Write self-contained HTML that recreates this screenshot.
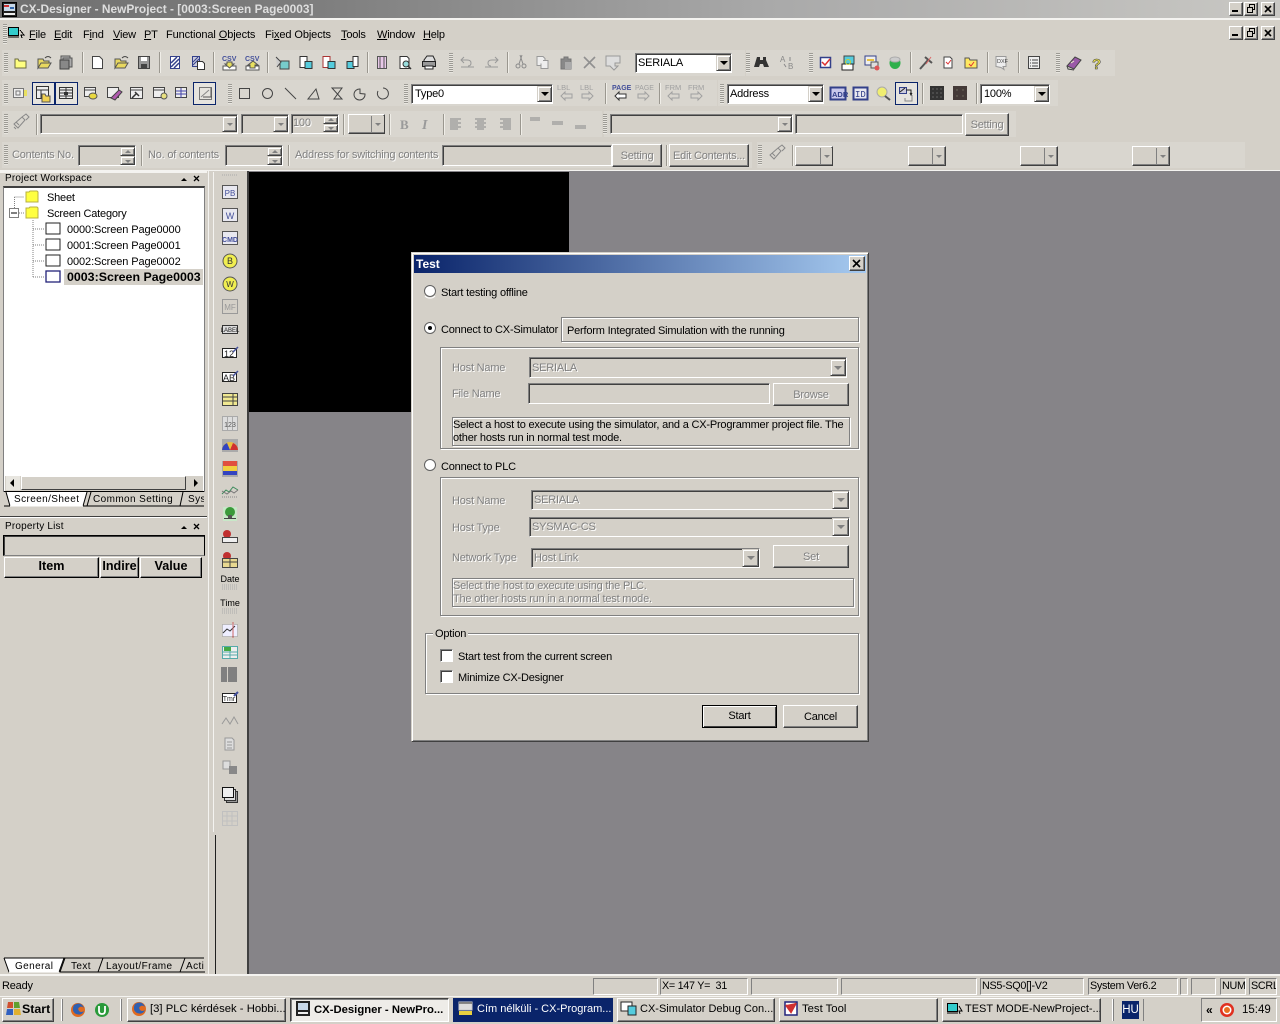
<!DOCTYPE html>
<html><head><meta charset="utf-8"><title>CX-Designer</title>
<style>
html,body{margin:0;padding:0;background:#d4d0c8;}
#r{position:relative;width:1280px;height:1024px;overflow:hidden;background:#d4d0c8;font:12px/14px "Liberation Sans",sans-serif;color:#000;}
#r div{position:absolute;box-sizing:border-box;}
.t{white-space:nowrap;font-size:11px;letter-spacing:-.2px;line-height:14px;margin-top:1px;}
.d{color:#808080;text-shadow:1px 1px 0 #fff;}
.su{background:#d4d0c8;border:1px solid;border-color:#808080 #fff #fff #808080;box-shadow:inset 1px 1px 0 #404040;}
.wh{background:#fff;}
.bt{background:#d4d0c8;border:1px solid;border-color:#fff #404040 #404040 #fff;box-shadow:inset -1px -1px 0 #808080;text-align:center;white-space:nowrap;font-size:11px;letter-spacing:-.2px;line-height:18px;padding-top:1px;}
.et{border:1px solid #808080;box-shadow:1px 1px 0 #fff,inset 1px 1px 0 #fff;}
.ar{background:#d4d0c8;border:1px solid;border-color:#d4d0c8 #404040 #404040 #d4d0c8;box-shadow:inset 1px 1px 0 #fff,inset -1px -1px 0 #808080;}
.ar:after{content:"";position:absolute;left:50%;top:50%;margin:-2px 0 0 -4px;border:4px solid transparent;border-top:4px solid #000;border-bottom:0;}
.ar.g:after{border-top-color:#808080;}
.ar.s:after{margin:-1px 0 0 -3px;border-width:3px;border-bottom:0;border-top-color:#808080;}
.ar.u:after{margin:-2px 0 0 -3px;border-width:3px;border-top:0;border-bottom:3px solid #808080;}
.tb{background:#d9d6cf;}
.gr{position:absolute;width:4px;background:repeating-linear-gradient(#9c9a94 0 1px,#e8e6e0 1px 2px);}
.sep{width:1px;background:#9a978f;box-shadow:1px 0 0 #f0eee8;}
.pr{background:#e6e4df;border:1px solid #0a246a;}
.st{border:1px solid;border-color:#808080 #fff #fff #808080;font-size:10.8px;letter-spacing:-.3px;line-height:15px;white-space:nowrap;padding-left:1px;overflow:hidden;}
.ws{background:#d4d0c8;border:1px solid;border-color:#fff #404040 #404040 #fff;box-shadow:inset -1px -1px 0 #808080;}
.task{background:#d4d0c8;border:1px solid;border-color:#fff #404040 #404040 #fff;box-shadow:inset -1px -1px 0 #808080;height:24px;top:998px;font-size:11.3px;line-height:21px;white-space:nowrap;overflow:hidden;}
.tab{font-size:10px;letter-spacing:.4px;white-space:nowrap;line-height:13px;z-index:2;margin-top:1px;}
</style></head><body><div id="r">

<!-- title -->
<div style="left:0;top:0;width:1280px;height:18px;background:linear-gradient(90deg,#6f6f6f 0,#7e7e7e 25%,#a9a9a9 60%,#c9c8c4 100%)"></div>
<div style="left:0;top:18px;width:1280px;height:2px;background:#f4f3f0"></div>
<div class="t" style="left:20px;top:2px;margin-top:0;letter-spacing:0;color:#dedede;font-weight:bold;font-size:11.9px;">CX-Designer - NewProject - [0003:Screen Page0003]</div>
<div class="ws" style="left:1229px;top:2px;width:14px;height:14px"></div>
<div class="ws" style="left:1244px;top:2px;width:14px;height:14px"></div>
<div class="ws" style="left:1261px;top:2px;width:14px;height:14px"></div>
<div class="ws" style="left:1229px;top:26px;width:14px;height:14px"></div>
<div class="ws" style="left:1244px;top:26px;width:14px;height:14px"></div>
<div class="ws" style="left:1261px;top:26px;width:14px;height:14px"></div>

<!-- menu -->
<div class="gr" style="left:3px;top:24px;height:20px"></div>
<div class="t" style="left:29px;top:27px"><u>F</u>ile</div>
<div class="t" style="left:54px;top:27px"><u>E</u>dit</div>
<div class="t" style="left:83px;top:27px">F<u>i</u>nd</div>
<div class="t" style="left:113px;top:27px"><u>V</u>iew</div>
<div class="t" style="left:144px;top:27px"><u>P</u>T</div>
<div class="t" style="left:166px;top:27px;letter-spacing:-.1px">Functional <u>O</u>bjects</div>
<div class="t" style="left:265px;top:27px;letter-spacing:-.1px">Fi<u>x</u>ed Objects</div>
<div class="t" style="left:341px;top:27px"><u>T</u>ools</div>
<div class="t" style="left:377px;top:27px"><u>W</u>indow</div>
<div class="t" style="left:423px;top:27px"><u>H</u>elp</div>

<!-- toolbar backgrounds -->
<div class="tb" style="left:2px;top:50px;width:743px;height:26px"></div>
<div class="tb" style="left:746px;top:50px;width:68px;height:26px"></div>
<div class="tb" style="left:807px;top:50px;width:308px;height:26px"></div>
<div class="tb" style="left:2px;top:80px;width:225px;height:26px"></div>
<div class="tb" style="left:225px;top:80px;width:180px;height:26px"></div>
<div class="tb" style="left:405px;top:80px;width:312px;height:26px"></div>
<div class="tb" style="left:718px;top:80px;width:258px;height:26px"></div>
<div class="tb" style="left:976px;top:80px;width:82px;height:26px"></div>
<div class="tb" style="left:2px;top:111px;width:600px;height:26px"></div>
<div class="tb" style="left:604px;top:111px;width:412px;height:26px"></div>
<div class="tb" style="left:2px;top:142px;width:750px;height:26px"></div>
<div class="tb" style="left:757px;top:142px;width:488px;height:26px"></div>

<div class="gr" style="left:4px;top:53px;height:20px"></div>
<div class="gr" style="left:4px;top:84px;height:20px"></div>
<div class="gr" style="left:4px;top:114px;height:20px"></div>
<div class="gr" style="left:4px;top:145px;height:20px"></div>
<div class="gr" style="left:449px;top:53px;height:20px"></div>
<div class="gr" style="left:228px;top:84px;height:20px"></div>
<div class="gr" style="left:404px;top:84px;height:20px"></div>
<div class="gr" style="left:746px;top:53px;height:20px"></div>
<div class="gr" style="left:809px;top:53px;height:20px"></div>
<div class="gr" style="left:1056px;top:53px;height:20px"></div>
<div class="gr" style="left:720px;top:84px;height:20px"></div>
<div class="gr" style="left:603px;top:114px;height:20px"></div>
<div class="gr" style="left:758px;top:145px;height:20px"></div>

<!-- separators -->
<div class="sep" style="left:82px;top:52px;height:21px"></div>
<div class="sep" style="left:159px;top:52px;height:21px"></div>
<div class="sep" style="left:213px;top:52px;height:21px"></div>
<div class="sep" style="left:267px;top:52px;height:21px"></div>
<div class="sep" style="left:367px;top:52px;height:21px"></div>
<div class="sep" style="left:507px;top:52px;height:21px"></div>
<div class="sep" style="left:910px;top:52px;height:21px"></div>
<div class="sep" style="left:987px;top:52px;height:21px"></div>
<div class="sep" style="left:1018px;top:52px;height:21px"></div>
<div class="sep" style="left:605px;top:83px;height:21px"></div>
<div class="sep" style="left:659px;top:83px;height:21px"></div>
<div class="sep" style="left:922px;top:83px;height:21px"></div>
<div class="sep" style="left:976px;top:83px;height:21px"></div>
<div class="sep" style="left:36px;top:114px;height:21px"></div>
<div class="sep" style="left:343px;top:114px;height:21px"></div>
<div class="sep" style="left:389px;top:114px;height:21px"></div>
<div class="sep" style="left:443px;top:114px;height:21px"></div>
<div class="sep" style="left:520px;top:114px;height:21px"></div>
<div class="sep" style="left:141px;top:145px;height:21px"></div>
<div class="sep" style="left:288px;top:145px;height:21px"></div>
<div class="sep" style="left:666px;top:145px;height:21px"></div>
<div class="sep" style="left:792px;top:145px;height:21px"></div>

<!-- pressed toolbar -->
<div class="pr" style="left:32px;top:82px;width:23px;height:23px"></div>
<div class="pr" style="left:55px;top:82px;width:23px;height:23px"></div>
<div class="pr" style="left:193px;top:82px;width:23px;height:23px"></div>
<div class="pr" style="left:895px;top:82px;width:23px;height:23px"></div>

<!-- row 1 combo -->
<div class="su wh" style="left:635px;top:53px;width:97px;height:20px"></div>
<div class="t" style="left:638px;top:55px">SERIALA</div>
<div class="ar" style="left:716px;top:55px;width:15px;height:16px"></div>
<!-- row 2 combos -->
<div class="su wh" style="left:411px;top:84px;width:142px;height:20px"></div>
<div class="t" style="left:415px;top:86px">Type0</div>
<div class="ar" style="left:537px;top:86px;width:15px;height:16px"></div>
<div class="su wh" style="left:727px;top:84px;width:97px;height:20px"></div>
<div class="t" style="left:730px;top:86px">Address</div>
<div class="ar" style="left:808px;top:86px;width:15px;height:16px"></div>
<div class="su wh" style="left:980px;top:84px;width:70px;height:20px"></div>
<div class="t" style="left:984px;top:86px">100%</div>
<div class="ar" style="left:1034px;top:86px;width:15px;height:16px"></div>

<!-- row 3 -->
<div class="su" style="left:40px;top:114px;width:198px;height:20px"></div>
<div class="ar s" style="left:222px;top:116px;width:15px;height:16px"></div>
<div class="su" style="left:241px;top:114px;width:48px;height:20px"></div>
<div class="ar s" style="left:273px;top:116px;width:15px;height:16px"></div>
<div class="su" style="left:291px;top:114px;width:48px;height:20px"></div>
<div class="t d" style="left:293px;top:115px">100</div>
<div class="ar u" style="left:323px;top:116px;width:15px;height:8px"></div>
<div class="ar s" style="left:323px;top:124px;width:15px;height:8px"></div>
<div class="bt" style="left:348px;top:114px;width:37px;height:20px"></div>
<div class="ar s" style="left:372px;top:116px;width:12px;height:16px;border:0;box-shadow:-1px 0 0 #808080"></div>
<div class="su" style="left:610px;top:114px;width:183px;height:20px"></div>
<div class="ar s" style="left:777px;top:116px;width:15px;height:16px"></div>
<div class="su" style="left:795px;top:114px;width:168px;height:20px"></div>
<div class="bt d" style="left:965px;top:113px;width:44px;height:23px;line-height:20px">Setting</div>

<!-- row 4 -->
<div class="t d" style="left:12px;top:147px">Contents No.</div>
<div class="su" style="left:78px;top:145px;width:58px;height:21px"></div>
<div class="ar u" style="left:120px;top:147px;width:15px;height:9px"></div>
<div class="ar s" style="left:120px;top:156px;width:15px;height:9px"></div>
<div class="t d" style="left:148px;top:147px">No. of contents</div>
<div class="su" style="left:225px;top:145px;width:58px;height:21px"></div>
<div class="ar u" style="left:267px;top:147px;width:15px;height:9px"></div>
<div class="ar s" style="left:267px;top:156px;width:15px;height:9px"></div>
<div class="t d" style="left:295px;top:147px">Address for switching contents</div>
<div class="su" style="left:442px;top:145px;width:170px;height:21px"></div>
<div class="bt d" style="left:612px;top:144px;width:50px;height:23px;line-height:20px">Setting</div>
<div class="bt d" style="left:669px;top:144px;width:80px;height:23px;line-height:20px">Edit Contents...</div>
<div class="bt" style="left:795px;top:146px;width:38px;height:20px"></div>
<div class="ar s" style="left:821px;top:148px;width:11px;height:16px;border:0;box-shadow:-1px 0 0 #808080"></div>
<div class="bt" style="left:908px;top:146px;width:38px;height:20px"></div>
<div class="ar s" style="left:933px;top:148px;width:11px;height:16px;border:0;box-shadow:-1px 0 0 #808080"></div>
<div class="bt" style="left:1020px;top:146px;width:38px;height:20px"></div>
<div class="ar s" style="left:1045px;top:148px;width:11px;height:16px;border:0;box-shadow:-1px 0 0 #808080"></div>
<div class="bt" style="left:1132px;top:146px;width:38px;height:20px"></div>
<div class="ar s" style="left:1157px;top:148px;width:11px;height:16px;border:0;box-shadow:-1px 0 0 #808080"></div>

<div style="left:0;top:170px;width:1280px;height:1px;background:#f4f3f0"></div>

<!-- MDI -->
<div style="left:247px;top:171px;width:1033px;height:803px;background:#868488;border-left:2px solid #404040"></div>
<div style="left:249px;top:172px;width:320px;height:240px;background:#000"></div>
<div style="left:0;top:974px;width:1280px;height:2px;background:#f4f3f0"></div>

<!-- left panel -->
<div style="left:0;top:171px;width:207px;height:2px;background:#f4f3f0"></div>
<div class="t" style="left:5px;top:172px;margin-top:0;font-size:10px;letter-spacing:.2px">Project Workspace</div>
<div style="left:3px;top:186px;width:202px;height:306px;background:#fff;border:1px solid #808080;border-top:2px solid #404040"></div>
<div class="t" style="left:47px;top:190px">Sheet</div>
<div class="t" style="left:47px;top:206px">Screen Category</div>
<div class="t" style="left:67px;top:222px;letter-spacing:-.1px">0000:Screen Page0000</div>
<div class="t" style="left:67px;top:238px;letter-spacing:-.1px">0001:Screen Page0001</div>
<div class="t" style="left:67px;top:254px;letter-spacing:-.1px">0002:Screen Page0002</div>
<div style="left:64px;top:269px;width:139px;height:16px;background:#d4d0c8"></div>
<div class="t" style="left:67px;top:270px;margin-top:0;font-weight:bold;font-size:12.4px;letter-spacing:0">0003:Screen Page0003</div>
<!-- scrollbar -->
<div style="left:5px;top:476px;width:198px;height:15px;background:#d4d0c8"></div>
<div style="left:6px;top:476px;width:14px;height:14px;background:#e8e6e0"></div>
<div style="left:21px;top:476px;width:165px;height:14px;background:#d4d0c8;border:1px solid;border-color:#fff #404040 #404040 #fff"></div>
<div style="left:10px;top:479px;width:0;height:0;border:4px solid transparent;border-right-color:#000;border-left:0"></div>
<div style="left:194px;top:479px;width:0;height:0;border:4px solid transparent;border-left-color:#000;border-right:0"></div>
<!-- tabs -->
<div style="left:4px;top:491px;width:200px;height:16px;background:#d4d0c8;border-top:1px solid #000"></div>
<div class="tab" style="left:14px;top:492px">Screen/Sheet</div>
<div class="tab" style="left:93px;top:492px">Common Setting</div>
<div class="tab" style="left:188px;top:492px;width:16px;overflow:hidden">Sys</div>

<div style="left:0;top:516px;width:207px;height:1px;background:#404040"></div>
<div style="left:0;top:517px;width:207px;height:1px;background:#fff"></div>
<div class="t" style="left:5px;top:519px;font-size:10px;letter-spacing:.2px">Property List</div>
<div style="left:3px;top:535px;width:202px;height:21px;border:1px solid;border-color:#000 #000 #808080 #000;box-shadow:inset 1px 1px 0 #404040"></div>
<div style="left:3px;top:556px;width:202px;height:418px;background:#d4d0c8"></div>
<div class="bt" style="left:4px;top:557px;width:95px;height:21px;font-weight:bold;font-size:12.6px;letter-spacing:0;line-height:17px;padding:0;border-color:#fff #000 #000 #fff">Item</div>
<div class="bt" style="left:100px;top:557px;width:39px;height:21px;font-weight:bold;font-size:12.6px;letter-spacing:0;line-height:17px;padding:0;border-color:#fff #000 #000 #fff">Indire</div>
<div class="bt" style="left:140px;top:557px;width:62px;height:21px;font-weight:bold;font-size:12.6px;letter-spacing:0;line-height:17px;padding:0;border-color:#fff #000 #000 #fff">Value</div>
<div class="tab" style="left:15px;top:959px">General</div>
<div class="tab" style="left:71px;top:959px">Text</div>
<div class="tab" style="left:106px;top:959px">Layout/Frame</div>
<div class="tab" style="left:186px;top:959px;width:18px;overflow:hidden">Acti</div>
<div style="left:215px;top:835px;width:1px;height:139px;background:#202020"></div>
<div style="left:208px;top:171px;width:1px;height:803px;background:#f4f3f0"></div>
<div style="left:213px;top:172px;width:1px;height:660px;background:#f4f3f0"></div>

<!-- side labels -->
<div class="t" style="left:219px;top:572px;font-size:9px;letter-spacing:0;line-height:12px;width:22px;text-align:center">Date</div>
<div class="t" style="left:219px;top:596px;font-size:9px;letter-spacing:0;line-height:12px;width:22px;text-align:center">Time</div>

<!-- dialog -->
<div style="left:411px;top:252px;width:458px;height:490px;background:#d4d0c8;border:1px solid;border-color:#d4d0c8 #404040 #404040 #d4d0c8;box-shadow:inset 1px 1px 0 #fff,inset -1px -1px 0 #808080"></div>
<div style="left:414px;top:255px;width:452px;height:18px;background:linear-gradient(90deg,#0a246a,#a6caf0)"></div>
<div class="t" style="left:416px;top:257px;margin-top:0;letter-spacing:0;color:#fff;font-weight:bold;font-size:12px">Test</div>
<div class="ws" style="left:849px;top:256px;width:16px;height:15px"></div>

<div class="t" style="left:441px;top:285px">Start testing offline</div>
<div class="t" style="left:441px;top:322px">Connect to CX-Simulator</div>
<div class="et" style="left:561px;top:317px;width:298px;height:25px"></div>
<div class="t" style="left:567px;top:323px">Perform Integrated Simulation with the running</div>
<div class="et" style="left:440px;top:347px;width:419px;height:102px"></div>
<div class="t d" style="left:452px;top:360px">Host Name</div>
<div class="su" style="left:529px;top:357px;width:318px;height:21px"></div>
<div class="t d" style="left:532px;top:360px">SERIALA</div>
<div class="ar g" style="left:830px;top:359px;width:16px;height:17px"></div>
<div class="t d" style="left:452px;top:386px">File Name</div>
<div class="su" style="left:528px;top:383px;width:242px;height:21px"></div>
<div class="bt d" style="left:773px;top:383px;width:76px;height:23px;line-height:20px">Browse</div>
<div class="et" style="left:452px;top:417px;width:398px;height:29px;border-color:#808080"></div>
<div class="t" style="left:453px;top:417px">Select a host to execute using the simulator, and a CX-Programmer project file. The</div>
<div class="t" style="left:453px;top:430px">other hosts run in normal test mode.</div>

<div class="t" style="left:441px;top:459px">Connect to PLC</div>
<div class="et" style="left:440px;top:477px;width:419px;height:139px"></div>
<div class="t d" style="left:452px;top:493px">Host Name</div>
<div class="su" style="left:531px;top:490px;width:319px;height:20px"></div>
<div class="t d" style="left:534px;top:492px">SERIALA</div>
<div class="ar g" style="left:832px;top:491px;width:17px;height:18px"></div>
<div class="t d" style="left:452px;top:520px">Host Type</div>
<div class="su" style="left:529px;top:517px;width:321px;height:20px"></div>
<div class="t d" style="left:532px;top:519px">SYSMAC-CS</div>
<div class="ar g" style="left:832px;top:518px;width:17px;height:18px"></div>
<div class="t d" style="left:452px;top:550px">Network Type</div>
<div class="su" style="left:531px;top:548px;width:229px;height:20px"></div>
<div class="t d" style="left:534px;top:550px">Host Link</div>
<div class="ar g" style="left:742px;top:549px;width:17px;height:18px"></div>
<div class="bt d" style="left:773px;top:545px;width:76px;height:23px;line-height:20px">Set</div>
<div class="et" style="left:452px;top:578px;width:402px;height:29px"></div>
<div class="t d" style="left:453px;top:578px">Select the host to execute using the PLC.</div>
<div class="t d" style="left:453px;top:591px">The other hosts run in a normal test mode.</div>

<div class="et" style="left:425px;top:633px;width:434px;height:61px"></div>
<div class="t" style="left:433px;top:626px;background:#d4d0c8;padding:0 2px">Option</div>
<div class="su wh" style="left:440px;top:649px;width:13px;height:13px"></div>
<div class="t" style="left:458px;top:649px">Start test from the current screen</div>
<div class="su wh" style="left:440px;top:670px;width:13px;height:13px"></div>
<div class="t" style="left:458px;top:670px">Minimize CX-Designer</div>
<div class="bt" style="left:702px;top:705px;width:75px;height:23px;line-height:19px;border:1px solid #000;box-shadow:inset 1px 1px 0 #fff,inset -1px -1px 0 #404040">Start</div>
<div class="bt" style="left:783px;top:705px;width:75px;height:23px;line-height:20px">Cancel</div>

<!-- status -->
<div class="t" style="left:2px;top:978px">Ready</div>
<div class="st" style="left:593px;top:978px;width:65px;height:17px"></div>
<div class="st" style="left:660px;top:978px;width:88px;height:17px">X= 147 Y=&nbsp; 31</div>
<div class="st" style="left:751px;top:978px;width:87px;height:17px"></div>
<div class="st" style="left:841px;top:978px;width:136px;height:17px"></div>
<div class="st" style="left:980px;top:978px;width:104px;height:17px">NS5-SQ0[]-V2</div>
<div class="st" style="left:1088px;top:978px;width:90px;height:17px">System Ver6.2</div>
<div class="st" style="left:1180px;top:978px;width:8px;height:17px"></div>
<div class="st" style="left:1191px;top:978px;width:25px;height:17px"></div>
<div class="st" style="left:1220px;top:978px;width:26px;height:17px">NUM</div>
<div class="st" style="left:1249px;top:978px;width:28px;height:17px">SCRL</div>

<!-- taskbar -->
<div style="left:0;top:996px;width:1280px;height:1px;background:#f4f3f0"></div>
<div class="task" style="left:2px;width:52px;font-weight:bold;padding-left:19px;font-size:12.4px">Start</div>
<div style="left:61px;top:999px;width:2px;height:22px;background:#fff;border-right:1px solid #808080"></div>
<div style="left:120px;top:999px;width:2px;height:22px;background:#fff;border-right:1px solid #808080"></div>
<div class="task" style="left:127px;width:159px;padding-left:22px">[3] PLC kérdések - Hobbi...</div>
<div class="task" style="left:290px;width:159px;padding-left:23px;font-weight:bold;background:#eeece8;border-color:#404040 #fff #fff #404040;box-shadow:inset 1px 1px 0 #808080;line-height:22px;font-size:11.3px">CX-Designer - NewPro...</div>
<div class="task" style="left:453px;width:160px;padding-left:23px;background:#0a246a;border-color:#0a246a;box-shadow:none;color:#fff;font-size:11px">Cím nélküli - CX-Program...</div>
<div class="task" style="left:617px;width:158px;padding-left:22px;font-size:11px">CX-Simulator Debug Con...</div>
<div class="task" style="left:779px;width:159px;padding-left:22px">Test Tool</div>
<div class="task" style="left:942px;width:159px;padding-left:22px;font-size:11px">TEST MODE-NewProject-...</div>
<div style="left:1112px;top:999px;width:2px;height:22px;background:#fff;border-right:1px solid #808080"></div>
<div style="left:1122px;top:1001px;width:17px;height:18px;background:#0a246a;color:#fff;font-size:11.5px;line-height:18px;text-align:center">HU</div>
<div style="left:1143px;top:999px;width:1px;height:22px;background:#808080"></div>
<div style="left:1201px;top:998px;width:76px;height:24px;border:1px solid;border-color:#808080 #fff #fff #808080"></div>
<div class="t" style="left:1206px;top:1002px;font-weight:bold;font-size:12px">«</div>
<div class="t" style="left:1242px;top:1002px;font-size:11.5px;letter-spacing:0">15:49</div>

<!-- ICON LAYER -->
<svg width="1280" height="1024" viewBox="0 0 1280 1024" style="position:absolute;left:0;top:0" fill="none" stroke-width="1" shape-rendering="crispEdges">
<!-- app icon -->
<g transform="translate(2,2)"><rect x=".5" y=".5" width="14" height="14" fill="#222" stroke="#000"/><rect x="2" y="2" width="11" height="7" fill="#c8d8e8"/><rect x="2" y="3" width="5" height="2" fill="#c33"/><rect x="8" y="5" width="4" height="2" fill="#36a"/><rect x="2" y="11" width="11" height="2" fill="#eee"/></g>
<!-- window btn glyphs -->
<g fill="#000"><rect x="1232" y="10" width="6" height="2"/><rect x="1232" y="34" width="6" height="2"/></g>
<g stroke="#000"><rect x="1249.5" y="4.5" width="5" height="5"/><rect x="1247.5" y="7.5" width="5" height="5" fill="#d4d0c8"/><rect x="1249.5" y="28.5" width="5" height="5"/><rect x="1247.5" y="31.5" width="5" height="5" fill="#d4d0c8"/></g>
<g stroke="#000" stroke-width="1.6" shape-rendering="auto"><path d="M1265 6l6 6M1271 6l-6 6M1265 30l6 6M1271 30l-6 6M853 260l7 7M860 260l-7 7"/></g>
<rect x="1249" y="4" width="6" height="1" fill="#000"/><rect x="1249" y="28" width="6" height="1" fill="#000"/>
<!-- menu icon -->
<g transform="translate(8,27)"><rect x=".5" y=".5" width="10" height="8" fill="#3cc" stroke="#000"/><path d="M0 10h11" stroke="#000"/><path d="M12 3l4 5h-3l1 3" stroke="#000"/></g>

<!-- row1 icons -->
<g shape-rendering="auto">
<path d="M15 59h3l1 2h7v7H15z" fill="#ffff80" stroke="#6b6b40"/>
<path d="M38 68V59h5l1 2h5v2H41l-3 5zm3-5h10l-3 5H38z" fill="#e8d860" stroke="#555"/><path d="M45 58q3-3 6 0" stroke="#444"/>
<rect x="61" y="56" width="9" height="9" fill="#bbb" stroke="#555"/><rect x="63" y="58" width="9" height="9" fill="#aaa" stroke="#555"/><rect x="60" y="60" width="9" height="9" fill="#888" stroke="#444"/>
<path d="M92.500 56.500h7l3 3v9h-10z" fill="#fff" stroke="#444"/>
<path d="M115 68V59h5l1 2h5v2H118l-3 5zm3-5h10l-3 5H115z" fill="#e8d860" stroke="#555"/><path d="M122 58q3-3 6 0" stroke="#444"/>
<rect x="138.500" y="56.500" width="11" height="12" fill="#999" stroke="#444"/><rect x="141" y="57" width="6" height="4" fill="#fff"/><rect x="141" y="64" width="6" height="4" fill="#444"/>
<path d="M170.500 56.500h9v12h-9z" fill="#fff" stroke="#33408a"/><path d="M171 63l6-6M171 67l8-8M174 68l5-5" stroke="#33408a" stroke-width="1.5"/>
<path d="M192.500 56.500h7v10h-7z" fill="#ccd" stroke="#33408a"/><path d="M193 62l5-5M193 65l6-6" stroke="#33408a"/><path d="M197.500 61.500h5l2 2v6h-7z" fill="#fff" stroke="#333"/>
<text x="222" y="61" font-size="7" font-weight="bold" fill="#44509a" font-family="Liberation Sans">CSV</text>
<text x="245" y="61" font-size="7" font-weight="bold" fill="#44509a" font-family="Liberation Sans">CSV</text>
<rect x="223" y="66" width="13" height="4" fill="#fff" stroke="#555"/><path d="M227 62h5v2h2l-4.500 4-4.500-4h2z" fill="#e8e060" stroke="#555"/>
<rect x="246" y="66" width="13" height="4" fill="#fff" stroke="#555"/><path d="M250 68h5v-3h3l-5-4-5 4h2z" fill="#e8e060" stroke="#555"/>
<rect x="280" y="61" width="9" height="8" fill="#7cc" stroke="#444"/><path d="M276 57l5 5-4 5" stroke="#444" fill="#ccc"/>
<path d="M300 56.500h7v11h-7z" fill="#fff" stroke="#333"/><rect x="305" y="61.500" width="7" height="7" fill="#5cd" stroke="#333"/>
<path d="M323 56.500h7v11h-7z" fill="#fff" stroke="#a33"/><rect x="328" y="61.500" width="7" height="7" fill="#5cd" stroke="#333"/>
<rect x="347" y="61.500" width="7" height="7" fill="#5cd" stroke="#333"/><path d="M353 56.500h5v10h-5z" fill="#fff" stroke="#333"/>
<rect x="377.500" y="56.500" width="9" height="12" fill="#e8c8e8" stroke="#555"/><path d="M380 57v11M384 57v11" stroke="#555"/>
<path d="M400 56.500h7l2 2v10h-9z" fill="#fff" stroke="#333"/><circle cx="406" cy="64" r="3" fill="#9dd" stroke="#333"/><path d="M408 66l3 3" stroke="#333" stroke-width="1.5"/>
<path d="M424 60l3-4h6l2 4v5h-11z" fill="#ddd" stroke="#222"/><rect x="422.500" y="61.500" width="13" height="5" fill="#999" stroke="#222"/><rect x="425" y="66" width="8" height="3" fill="#fff" stroke="#222"/>
<g stroke="#999"><path d="M461 67h13M464 57l-3 3 3 3" /><path d="M461 60h6q4 0 4 3t-3 3"/><path d="M485 67h13M495 57l3 3-3 3"/><path d="M498 60h-6q-4 0-4 3t3 3"/></g>
<g stroke="#8a8a8a"><circle cx="518" cy="66" r="2"/><circle cx="524" cy="66" r="2"/><path d="M519 64l3-9M523 64l-3-9"/></g>
<path d="M537 56.500h6l2 2v7h-8z" fill="#eee" stroke="#999"/><path d="M543 60.500h5v8h-7v-5" fill="#eee" stroke="#999"/>
<path d="M561 59h3v-2h4v2h3v10h-10z" fill="#888" stroke="#777"/><rect x="565" y="62" width="7" height="7" fill="#aaa"/>
<path d="M584 57l11 11M595 57l-11 11" stroke="#909090" stroke-width="1.6"/>
<path d="M606 56h14v7h-5v3h3l-4 4-4-4h-4z" fill="#ddd" stroke="#999"/>
<!-- binoculars etc -->
<path d="M757 57h3v3h3v-3h3v3l3 7h-5l-1-3h-3l-1 3h-5z" fill="#333"/>
<text x="780" y="62" font-size="8" fill="#888" font-family="Liberation Sans">A</text><text x="788" y="69" font-size="8" fill="#888" font-family="Liberation Sans">B</text><path d="M784 64l2 3M790 57v4" stroke="#888"/>
<rect x="820.500" y="57.500" width="10" height="10" fill="#fff" stroke="#33408a" stroke-width="1.500"/><path d="M822 62l3 3 5-6" stroke="#d33" stroke-width="1.500"/>
<rect x="844" y="56" width="10" height="8" fill="#5cd" stroke="#444"/><rect x="842" y="64" width="11" height="6" fill="#fff" stroke="#222"/><circle cx="848" cy="62" r="2.500" stroke="#cc3"/>
<rect x="865" y="56" width="11" height="9" fill="#eee" stroke="#33408a"/><rect x="867" y="59" width="7" height="2" fill="#e8c040"/><rect x="871" y="62" width="7" height="6" fill="#ddd" stroke="#555"/><circle cx="877" cy="68" r="2.500" fill="#d55"/>
<ellipse cx="895" cy="63" rx="5.500" ry="6" fill="#2fb04c"/><ellipse cx="895" cy="59.500" rx="5" ry="2.500" fill="#ccc" stroke="#aaa"/>
<path d="M920 69l8-9" stroke="#555" stroke-width="2"/><path d="M925 57l7 6" stroke="#555" stroke-width="2"/><path d="M926 64l5-7" stroke="#d66"/>
<path d="M944 57h6l2 2v9h-8z" fill="#fff" stroke="#444"/><path d="M946 62l2 2 3-4" stroke="#d33"/>
<path d="M965 60v-2h4l1 2h7v8h-12z" fill="#ffe860" stroke="#555"/><path d="M969 64l2 2 3-4" stroke="#d33"/>
<path d="M996 56.500h10v10h-3l1 3-3-2-5-1z" fill="#eee" stroke="#999"/><text x="997" y="63" font-size="5.500" fill="#444" font-family="Liberation Sans">DXF</text>
<rect x="1028.500" y="56.500" width="11" height="12" fill="#eee" stroke="#444"/><path d="M1032 60h6M1032 63h6M1032 66h6M1030 60h1M1030 63h1M1030 66h1" stroke="#444"/>
<path d="M1067 66l8-9 6 3-7 9z" fill="#9a5aa8" stroke="#444"/><path d="M1067 66l1 3 6 1" stroke="#444"/><path d="M1071 63l3-2" stroke="#eec"/>
<text x="1092" y="69" font-size="15" font-weight="bold" fill="#e8e050" stroke="#333" stroke-width=".5" font-family="Liberation Sans">?</text>

<!-- row 2 -->
<rect x="13.500" y="88.500" width="10" height="9" fill="#eee" stroke="#777"/><rect x="16" y="91" width="4" height="4" stroke="#777"/><rect x="24" y="90" width="3" height="6" fill="#e8e060"/>
<rect x="36.500" y="86.500" width="12" height="12" fill="#eee" stroke="#333"/><path d="M36 90h12M41 90v8" stroke="#333"/><path d="M42 94h3l1 2h4v6h-8z" fill="#f0d050" stroke="#555"/>
<rect x="59.500" y="87.500" width="13" height="11" fill="#eee" stroke="#333"/><path d="M60 90h13M60 93h13M60 96h13M66 88v11" stroke="#333"/><rect x="64" y="92" width="4" height="3" fill="#333"/>
<rect x="84.500" y="87.500" width="11" height="9" fill="#eee" stroke="#444"/><path d="M84 90h12" stroke="#444"/><ellipse cx="93" cy="96" rx="4" ry="3" fill="#e8d840" stroke="#555"/>
<rect x="107.500" y="87.500" width="11" height="10" fill="#eee" stroke="#444"/><path d="M111 98l8-8 3 2-7 8z" fill="#b05ab0" stroke="#444"/>
<rect x="130.500" y="87.500" width="12" height="11" fill="#eee" stroke="#444"/><path d="M130 90h13" stroke="#444"/><path d="M132 98l5-5M135 92l4 4" stroke="#333" stroke-width="1.500"/>
<rect x="153.500" y="87.500" width="11" height="10" fill="#eee" stroke="#444"/><path d="M153 90h12" stroke="#444"/><circle cx="164" cy="96" r="3" fill="#e8e080" stroke="#555"/>
<rect x="175.500" y="87.500" width="11" height="10" fill="#eee" stroke="#444"/><path d="M176 91h11M176 94h11M181 88v10" stroke="#44a"/>
<rect x="199.500" y="87.500" width="12" height="12" stroke="#777"/><path d="M203 97h9M211 88v9" stroke="#555"/><path d="M201 97l8-7" stroke="#888"/>
<g stroke="#444"><rect x="239.500" y="88.500" width="10" height="10"/><circle cx="267.500" cy="93.500" r="5"/><path d="M285 88l11 11"/><path d="M308 99h11l-3-10z"/><path d="M332 88h10l-8 11h8l-10-11z"/><path d="M360 89a5.500 5.500 0 1 0 5 5l-5-.5z"/><path d="M383 88a5.500 5.500 0 1 1-5 3"/></g>
<text x="557" y="90" font-size="7.500" fill="#a0a0a0" font-family="Liberation Sans">LBL</text><text x="580" y="90" font-size="7.500" fill="#a0a0a0" font-family="Liberation Sans">LBL</text>
<path d="M572 94h-7v-2l-4 4 4 4v-2h7z" stroke="#a0a0a0"/><path d="M582 94h7v-2l4 4-4 4v-2h-7z" stroke="#a0a0a0"/>
<text x="612" y="90" font-size="7" fill="#44509a" font-weight="bold" font-family="Liberation Sans">PAGE</text><path d="M626 94h-7v-2l-4 4 4 4v-2h7z" fill="#fff" stroke="#333"/>
<text x="635" y="90" font-size="7" fill="#a0a0a0" font-family="Liberation Sans">PAGE</text><path d="M638 94h7v-2l4 4-4 4v-2h-7z" stroke="#a0a0a0"/>
<text x="665" y="90" font-size="7.500" fill="#a0a0a0" font-family="Liberation Sans">FRM</text><path d="M679 94h-7v-2l-4 4 4 4v-2h7z" stroke="#a0a0a0"/>
<text x="688" y="90" font-size="7.500" fill="#a0a0a0" font-family="Liberation Sans">FRM</text><path d="M691 94h7v-2l4 4-4 4v-2h-7z" stroke="#a0a0a0"/>
<rect x="830.500" y="87.500" width="15" height="12" fill="#c8c8ec" stroke="#33408a" stroke-width="2"/><text x="832" y="97" font-size="7.500" fill="#33408a" font-family="Liberation Sans" font-weight="bold">ADR</text>
<rect x="853.500" y="87.500" width="14" height="12" fill="#e8e8f0" stroke="#33408a" stroke-width="2"/><text x="855" y="97" font-size="9" fill="#33408a" font-family="Liberation Mono">ID</text>
<circle cx="882" cy="92" r="5" fill="#f0ee70" stroke="#aaa"/><path d="M885 96l5 4" stroke="#555" stroke-width="2"/>
<rect x="899.500" y="87.500" width="7" height="6" fill="#ccd" stroke="#33408a"/><path d="M900 92l5-4M906 90h5v4M910 93l1 2 1-2" stroke="#222"/><path d="M912 95v6h-7v-3" stroke="#888"/>
<rect x="930" y="86" width="14" height="14" fill="#333"/><g fill="#888"><circle cx="933" cy="89" r=".6"/><circle cx="937" cy="89" r=".6"/><circle cx="941" cy="89" r=".6"/><circle cx="933" cy="93" r=".6"/><circle cx="937" cy="93" r=".6"/><circle cx="941" cy="93" r=".6"/><circle cx="933" cy="97" r=".6"/><circle cx="937" cy="97" r=".6"/><circle cx="941" cy="97" r=".6"/></g>
<rect x="953" y="86" width="14" height="14" fill="#443a38"/><g fill="#776"><circle cx="957" cy="90" r=".7"/><circle cx="963" cy="90" r=".7"/><circle cx="957" cy="96" r=".7"/><circle cx="963" cy="96" r=".7"/></g>

<!-- row 3 -->
<g stroke="#888"><path d="M14 124l8-7 3 3-7 8zM22 117l4-3 3 3-3 3"/><path d="M16 122l3 3M14 127l2 2"/></g>
<path d="M770 155l8-7 3 3-7 8zM778 148l4-3 3 3-3 3M772 153l3 3" stroke="#888"/>
<text x="400" y="129" font-size="13" font-weight="bold" fill="#9a9a9a" font-family="Liberation Serif">B</text><text x="422" y="129" font-size="14" font-weight="bold" font-style="italic" fill="#9a9a9a" font-family="Liberation Serif">I</text>
<g stroke="#888" shape-rendering="crispEdges"><path d="M450 119h11M450 121h8M450 123h11M450 125h8M450 127h11M450 129h8"/><path d="M475 119h11M477 121h7M475 123h11M477 125h7M475 127h11M477 129h7"/><path d="M500 119h11M503 121h8M500 123h11M503 125h8M500 127h11M503 129h8"/><path d="M530 118h10M530 120h10M552 122h11M552 124h11M575 126h11M575 128h11"/></g>

<!-- tree -->
<g stroke="#808080" stroke-dasharray="1 1" shape-rendering="crispEdges"><path d="M14.500 197v15M14.500 197h10M19 213h5M33 220v57M33 229h11M33 245h11M33 261h11M33 277h11"/></g>
<rect x="9.500" y="208.500" width="9" height="9" fill="#fff" stroke="#808080"/><path d="M11 213h6" stroke="#000"/>
<path d="M26 194v-2h3l1-1h7l1 1v10H26z" fill="#ffff40" stroke="#b8b040"/><path d="M26 210v-2h3l1-1h7l1 1v10H26z" fill="#ffff40" stroke="#b8b040"/>
<g fill="#fff" stroke="#222"><rect x="46" y="223" width="14" height="11"/><rect x="46" y="239" width="14" height="11"/><rect x="46" y="255" width="14" height="11"/></g><rect x="46" y="271" width="14" height="11" fill="#fff" stroke="#22227a" stroke-width="1.300"/>
<!-- panel close arrows -->
<path d="M181 181l3-3 3 3z" fill="#000"/><path d="M181 529l3-3 3 3z" fill="#000"/><path d="M194 176l5 5M199 176l-5 5M194 524l5 5M199 524l-5 5" stroke="#000" stroke-width="1.300"/>
<!-- tabs -->
<g stroke="#000" fill="#fff"><path d="M6 492l4 14h73l4-14" /></g>
<g stroke="#000" fill="none"><path d="M87 506l4-14M180 506l3-14M176 506h9M83 506h95M204 506H4"/></g>
<path d="M10 506h73" stroke="#fff"/>
<g fill="#fff" stroke="#000"><path d="M4 958l5 14h50l5-14"/></g><path d="M60 972l5-14M98 972l5-14M180 972l5-14M60 972h145" stroke="#000"/><path d="M9 972h50" stroke="#fff"/><path d="M4 958h200" stroke="#000"/>

<!-- side toolbar -->
<g font-family="Liberation Sans" text-anchor="middle">
<path d="M222 175h16" stroke="#aaa" stroke-dasharray="1 1"/>
<g fill="#e8e8f0" stroke="#555"><rect x="222.500" y="185.500" width="15" height="13"/><rect x="222.500" y="208.500" width="15" height="13"/><rect x="222.500" y="231.500" width="15" height="13"/></g>
<text x="230" y="196" font-size="8" fill="#44509a">PB</text><text x="230" y="219" font-size="9" fill="#44509a">W</text><text x="230" y="242" font-size="7" fill="#44509a" font-weight="bold">CMD</text>
<circle cx="230" cy="261" r="7" fill="#f0ee50" stroke="#555"/><text x="230" y="264" font-size="9" fill="#333">B</text>
<circle cx="230" cy="284" r="7" fill="#f0ee50" stroke="#555"/><text x="230" y="287" font-size="8" fill="#333">W</text>
<rect x="222.500" y="299.500" width="15" height="14" stroke="#999"/><text x="230" y="310" font-size="8" fill="#999">MF</text>
<rect x="222.500" y="325.500" width="15" height="8" fill="#ddd" stroke="#333"/><text x="230" y="332" font-size="6" fill="#222">LABEL</text>
<rect x="222.500" y="348.500" width="14" height="9" fill="#fff" stroke="#222"/><text x="229" y="357" font-size="9" fill="#222">12</text><path d="M233 352l5-5" stroke="#44509a" stroke-width="1.500"/>
<rect x="222.500" y="372.500" width="14" height="9" fill="#fff" stroke="#222"/><text x="229" y="381" font-size="9" fill="#222">AB</text><path d="M233 376l5-5" stroke="#44509a" stroke-width="1.500"/>
<rect x="222.500" y="393.500" width="15" height="12" fill="#f0e890" stroke="#444"/><path d="M223 397h15M223 401h15M233 394v12" stroke="#444"/>
<g fill="#ddd" stroke="#aaa"><rect x="222.500" y="416.500" width="5" height="14"/><rect x="227.500" y="416.500" width="5" height="14"/><rect x="232.500" y="416.500" width="5" height="14"/></g><text x="230" y="427" font-size="7" fill="#555">123</text>
<rect x="222" y="439" width="16" height="13" fill="#aaa"/><path d="M222 450a8 8 0 0 1 16 0z" fill="#e8c040"/><path d="M222 450a8 8 0 0 1 5-7l3 7z" fill="#3344c0"/><path d="M238 450a8 8 0 0 0-5-7l-3 7z" fill="#d03030"/>
<rect x="222" y="461" width="16" height="16" fill="#aaa"/><rect x="223" y="461" width="14" height="5" fill="#e05040"/><rect x="223" y="466" width="14" height="5" fill="#f0d040"/><rect x="223" y="471" width="14" height="4" fill="#3344c0"/>
<path d="M222 494l4-4 3 2 4-5 5 3" stroke="#3a8a5a"/><path d="M222 491l5 3 4-3 3 2 4-3" stroke="#777"/><path d="M222 497h16" stroke="#888" stroke-dasharray="1 1"/>
<rect x="223" y="507" width="14" height="14" fill="#c8e8c8"/><circle cx="230" cy="512" r="5" fill="#3a9a3a"/><rect x="228" y="515" width="4" height="4" fill="#555"/><rect x="224" y="518" width="12" height="1" fill="#444"/>
<circle cx="227" cy="534" r="4" fill="#c03030"/><rect x="222.500" y="537.500" width="15" height="5" fill="#eee" stroke="#444"/>
<circle cx="227" cy="556" r="4" fill="#c03030"/><rect x="222.500" y="558.500" width="15" height="9" fill="#e8d890" stroke="#444"/><path d="M223 562h15M230 559v9" stroke="#444"/>
<g stroke="#aaa" stroke-dasharray="1 1"><path d="M222 585h16M222 587h16M222 589h16M222 609h16M222 611h16M222 613h16"/></g>
<rect x="222.500" y="624.500" width="15" height="12" fill="#eef" stroke="#999" stroke-dasharray="1 1"/><path d="M223 633l4-4 3 2 5-5" stroke="#333"/><path d="M233 622v16" stroke="#c66"/>
<rect x="222.500" y="646.500" width="15" height="12" fill="#eee" stroke="#5aa"/><path d="M223 652h15M223 655h15M230 647v12" stroke="#5aa"/><rect x="224" y="647" width="7" height="4" fill="#4a4"/>
<rect x="221" y="667" width="6" height="15" fill="#808080"/><rect x="228" y="667" width="9" height="15" fill="#808080"/>
<rect x="222.500" y="693.500" width="14" height="9" fill="#fff" stroke="#222"/><text x="229" y="701" font-size="7" fill="#222">Tmr</text><path d="M234 696l4-4" stroke="#44509a" stroke-width="2"/>
<path d="M222 724l4-6 4 6 4-7 4 7" stroke="#999"/>
<path d="M225 738h7l2 2v10h-9z" fill="#ddd" stroke="#999"/><path d="M227 742h5M227 745h5M227 748h5" stroke="#999"/>
<path d="M223 761h7v8h-7z" fill="#ddd" stroke="#999"/><rect x="229" y="766" width="8" height="8" fill="#888"/>
<rect x="226.500" y="791.500" width="11" height="11" fill="#999" stroke="#333"/><rect x="224.500" y="789.500" width="11" height="11" fill="#ddd" stroke="#333"/><rect x="222.500" y="787.500" width="11" height="10" fill="#eee" stroke="#111"/>
<rect x="222.500" y="811.500" width="15" height="14" stroke="#c0c0c0"/><path d="M223 816h15M223 821h15M227 812v14M232 812v14" stroke="#c0c0c0"/>
</g>

<!-- dialog radios -->
<g>
<circle cx="430" cy="291" r="5.500" fill="#fff" stroke="#606060"/><path d="M425 296a7 7 0 0 0 10 0" stroke="#fff"/>
<circle cx="430" cy="328" r="5.500" fill="#fff" stroke="#606060"/><circle cx="430" cy="328" r="2" fill="#000"/>
<circle cx="430" cy="465" r="5.500" fill="#fff" stroke="#606060"/>
</g>

<!-- taskbar icons -->
<g>
<path d="M8 1002h5v6H7zM14 1002h5v6h-5z" fill="#d05030"/><path d="M14 1002h5l1 6h-6z" fill="#60a030"/><path d="M7 1009h6v6H6z" fill="#3060c0"/><path d="M14 1009h6l1 6h-7z" fill="#e0b030"/>
<circle cx="78" cy="1010" r="7" fill="#e06a20"/><path d="M74 1005q7-4 10 3q-2-2-4-1q-3 1-1 4q2 2 5 0q-2 5-8 3q-5-3-2-9z" fill="#3060b0"/>
<circle cx="102" cy="1010" r="7" fill="#2a9a3a"/><path d="M99 1006v5q0 3 3 3t3-3v-5" stroke="#fff" stroke-width="1.800"/>
<circle cx="139" cy="1009" r="7" fill="#e06a20"/><path d="M135 1004q7-4 10 3q-2-2-4-1q-3 1-1 4q2 2 5 0q-2 5-8 3q-5-3-2-9z" fill="#3060b0"/>
<rect x="296" y="1001" width="14" height="15" fill="#222"/><rect x="298" y="1003" width="10" height="7" fill="#c8d8e8"/><rect x="298" y="1012" width="10" height="2" fill="#eee"/>
<rect x="459" y="1002" width="13" height="8" fill="#ddd" stroke="#ccc"/><rect x="459" y="1011" width="13" height="4" fill="#e8d040"/><path d="M459 1003h13" stroke="#333"/>
<rect x="621" y="1002" width="11" height="9" fill="#fff" stroke="#222"/><rect x="628" y="1006" width="8" height="9" fill="#5cd" stroke="#222"/>
<rect x="785" y="1002" width="12" height="13" fill="#fff" stroke="#22227a" stroke-width="1.500"/><path d="M786 1005l5 7 5-9" stroke="#d03030" stroke-width="2" fill="#d03030"/>
<g transform="translate(947,1003)"><rect x=".5" y=".5" width="10" height="8" fill="#3cc" stroke="#000"/><path d="M0 10h11M12 3l3 5h-3l1 3" stroke="#000"/></g>
<circle cx="1227" cy="1010" r="7" fill="#e03020"/><circle cx="1227" cy="1010" r="4.500" fill="#fff"/><circle cx="1227" cy="1010" r="3" fill="#e87020"/>
</g>
</g>
</svg>
</div></body></html>
